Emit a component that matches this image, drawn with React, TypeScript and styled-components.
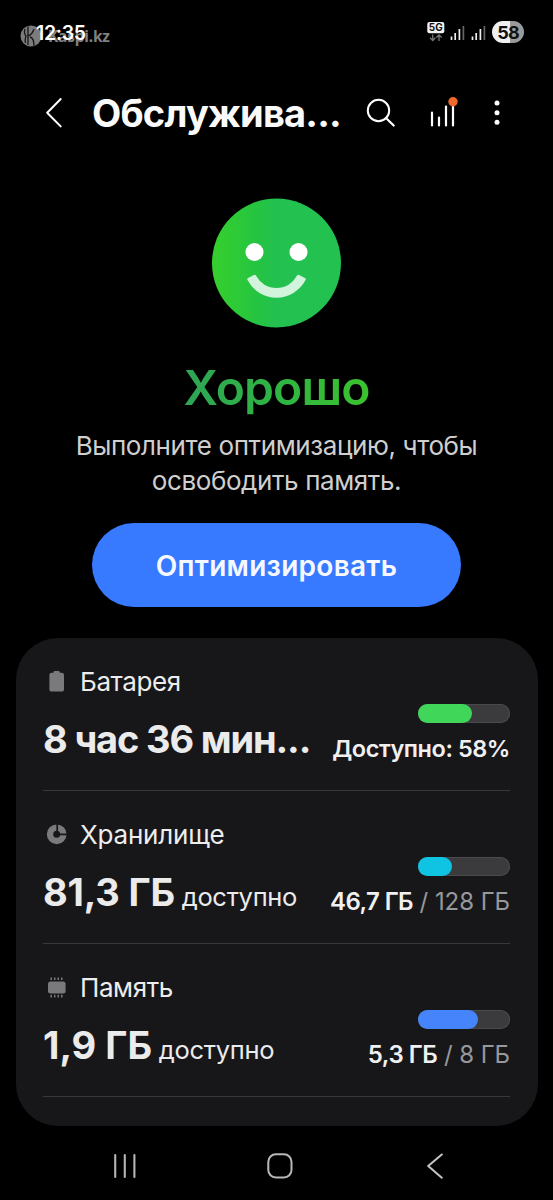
import React from "react";
import styled, { createGlobalStyle } from "styled-components";

const Global = createGlobalStyle`
  * { box-sizing: border-box; }
  body { margin: 0; background: #000; font-family: Inter, "Noto Sans", sans-serif; }
  svg { display: block; flex: none; }
`;

const Screen = styled.main`
  width: 553px;
  height: 1200px;
  display: flex;
  flex-direction: column;
  background: #000;
  color: #fff;
  overflow: hidden;
`;

const Txt = styled.span<{ $size: number; $weight?: number; $track?: number; $color?: string }>`
  font-size: ${(p) => p.$size}px;
  font-weight: ${(p) => p.$weight ?? 400};
  letter-spacing: ${(p) => p.$track ?? 0}px;
  color: ${(p) => p.$color ?? "inherit"};
  white-space: nowrap;
`;

const StatusBar = styled.div`
  height: 64px;
  display: flex;
  justify-content: space-between;
  padding: 0 29px 0 20px;
`;

const Clock = styled.div`
  position: relative;
  display: flex;
  width: 100px;
  padding: 22px 0 0 16px;
  line-height: 22px;
`;

const Watermark = styled.div`
  position: absolute;
  left: 0;
  top: 25px;
  display: flex;
  align-items: center;
  gap: 6px;
  color: #808080;
  font-family: "Noto Sans", sans-serif;
`;

const Time = styled(Txt)`
  position: relative;
`;

const StatusIcons = styled.div`
  display: flex;
  padding-top: 21px;
`;

const Battery = styled.div`
  width: 32px;
  height: 22px;
  margin-left: 6px;
  border-radius: 11px;
  background: linear-gradient(90deg, #f0f0f0 57%, #9a9a9a 57%);
  color: #111;
  display: flex;
  align-items: center;
  justify-content: center;
`;

const Header = styled.header`
  height: 98px;
  display: flex;
  align-items: center;
  padding: 0 48px 0 45px;
`;

const Title = styled.h1`
  margin: 0 0 0 29px;
  width: 274px;
  font-size: 38px;
  line-height: 48px;
  font-weight: 700;
  letter-spacing: -0.8px;
  color: #fafafa;
  white-space: nowrap;
`;

const Hero = styled.section`
  height: 475.5px;
  display: flex;
  flex-direction: column;
  align-items: center;
  padding-top: 36px;
`;

const Status = styled.h2`
  margin: 31px 0 0;
  height: 58px;
  line-height: 58px;
  font-size: 48px;
  font-weight: 600;
  letter-spacing: -0.9px;
  background: linear-gradient(90deg, #2fa456, #2fb443 50%, #3cc22e);
  background-clip: text;
  -webkit-background-clip: text;
  color: transparent;
`;

const Hint = styled.p`
  margin: 11px 0 0;
  text-align: center;
  font-size: 26px;
  line-height: 35px;
  letter-spacing: -0.4px;
  color: #cfcfcf;
`;

const Optimize = styled.button`
  margin-top: 25px;
  width: 369px;
  height: 84px;
  border: 0;
  border-radius: 42px;
  background: #387aff;
  color: #f5f9ff;
  font: 600 28px/84px Inter, sans-serif;
  letter-spacing: 0.28px;
  padding: 1px 0 0;
`;

const Card = styled.section`
  width: 522px;
  height: 488.5px;
  margin-left: 15.5px;
  padding: 0 27.5px;
  border-radius: 42px;
  background: #17171a;
`;

const Row = styled.div`
  height: 153px;
  display: flex;
  justify-content: space-between;
  border-bottom: 1.5px solid #38383a;
`;

const Info = styled.div`
  display: flex;
  flex-direction: column;
  padding-top: 29px;
`;

const Label = styled.div`
  height: 30px;
  display: flex;
  align-items: center;
  gap: 10px;
  padding-left: 3px;
  color: #ededed;
`;

const Value = styled.div`
  margin-top: 19px;
  line-height: 46px;
  color: #ebebec;
  white-space: nowrap;
`;

const Usage = styled.div`
  display: flex;
  flex-direction: column;
  align-items: flex-end;
  padding-top: 66px;
`;

const Track = styled.div`
  width: 92px;
  height: 19px;
  border-radius: 10px;
  background: #3b3b3d;
  box-shadow: inset 0 0 0 1px #4a4a4c;
`;

const Fill = styled.div<{ $w: number; $color: string }>`
  width: ${(p) => p.$w}px;
  height: 19px;
  border-radius: 10px;
  background: ${(p) => p.$color};
`;

const Amount = styled.div`
  margin-top: 11px;
  line-height: 30px;
  color: #f0f0f1;
  white-space: nowrap;
`;

const NavBar = styled.nav`
  height: 74px;
  display: flex;
  align-items: center;
  padding: 6px 0 0 112px;
  gap: 128.5px;
`;

const Signal = ({ gap }: { gap: number }) => (
  <svg width="15" height="22" viewBox="0 0 15 22" style={{ marginLeft: gap }}>
    <path d="M1.5 15.5V19M5.2 12V19M9.4 8V19" stroke="#eee" strokeWidth="1.7" fill="none" />
    <path d="M13.4 5V19" stroke="#666" strokeWidth="1.7" />
  </svg>
);

const BatteryIcon = () => (
  <svg width="24" height="24" viewBox="0 0 24 24">
    <path d="M7.5 2 Q7.5 1 8.5 1 H12.7 Q13.7 1 13.7 2 V2.7 H15.8 Q18 2.7 18 4.9 V19.4 Q18 21.6 15.8 21.6 H5.6 Q3.4 21.6 3.4 19.4 V4.9 Q3.4 2.7 5.6 2.7 H7.5Z" fill="#7a7a7c" />
  </svg>
);

const StorageIcon = () => (
  <svg width="24" height="24" viewBox="0 0 24 24">
    <circle cx="10.7" cy="11.3" r="6.7" fill="none" stroke="#7a7a7c" strokeWidth="6.4" />
    <path d="M11.2 0.3V11.3H22" fill="none" stroke="#17171a" strokeWidth="1.7" />
  </svg>
);

const MemoryIcon = () => (
  <svg width="24" height="24" viewBox="0 0 24 24">
    <rect x="2" y="5.4" width="17.6" height="12.2" rx="2.5" fill="#7a7a7c" />
    <path d="M5.2 1.4V4M8.7 1.4V4M12.3 1.4V4M15.8 1.4V4M5.2 18.8V21.4M8.7 18.8V21.4M12.3 18.8V21.4M15.8 18.8V21.4" stroke="#7a7a7c" strokeWidth="1.5" />
  </svg>
);

export default function App() {
  return (
    <Screen>
      <Global />
      <StatusBar>
        <Clock>
          <Watermark>
            <svg width="22" height="22" viewBox="0 0 22 22">
              <circle cx="11" cy="11" r="10.5" fill="#7c7c7c" />
              <path d="M8 1.5V20M8 11Q12 10 14 4M10 12Q14 13 14 21M5 4Q3.5 8 6 11Q4.5 15 5.5 18" stroke="#151515" strokeWidth="1.3" fill="none" />
            </svg>
            <Txt $size={15.5} $weight={700} $track={-0.2}>Kaspi.kz</Txt>
          </Watermark>
          <Time $size={19.5} $weight={600} $track={-0.3}>12:35</Time>
        </Clock>
        <StatusIcons>
          <svg width="18" height="22" viewBox="0 0 18 22">
            <rect x="0.3" y="1" width="17" height="11.3" rx="2" fill="#f2f2f2" />
            <text x="8.8" y="10.3" textAnchor="middle" fontFamily="Inter" fontWeight="700" fontSize="10" fill="#111">5G</text>
            <path d="M5.7 13.5V19.3M3 16.8L5.7 19.5L8.4 16.8M12 20V14M9.3 16.5L12 13.8L14.7 16.5" fill="none" stroke="#777" strokeWidth="1.3" />
          </svg>
          <Signal gap={5} />
          <Signal gap={6} />
          <Battery><Txt $size={18} $weight={700} $track={-0.8}>58</Txt></Battery>
        </StatusIcons>
      </StatusBar>

      <Header>
        <svg width="18" height="32" viewBox="0 0 18 32">
          <path d="M15.7 2L2.2 15.7L15.7 29.4" fill="none" stroke="#fff" strokeWidth="2" strokeLinecap="round" strokeLinejoin="round" />
        </svg>
        <Title>Обслужива...</Title>
        <svg width="30" height="30" viewBox="0 0 30 30">
          <circle cx="12.5" cy="12.5" r="10.7" fill="none" stroke="#fff" strokeWidth="2" />
          <path d="M20 20L27.7 27.5" stroke="#fff" strokeWidth="2.2" strokeLinecap="round" />
        </svg>
        <svg width="32" height="32" viewBox="0 0 32 32" style={{ marginLeft: 33 }}>
          <path d="M3 15.5V28.5M10 20.5V28.5M17 9.5V28.5M24 6V28.5" stroke="#fff" strokeWidth="2.2" strokeLinecap="round" />
          <circle cx="24" cy="4.7" r="4.7" fill="#ef6a2c" />
        </svg>
        <svg width="6" height="26" viewBox="0 0 6 26" style={{ marginLeft: 33 }}>
          <circle cx="3" cy="3" r="2.5" fill="#fff" />
          <circle cx="3" cy="12.7" r="2.5" fill="#fff" />
          <circle cx="3" cy="22.3" r="2.5" fill="#fff" />
        </svg>
      </Header>

      <Hero>
        <svg width="129" height="130" viewBox="0 0 129 130">
          <defs>
            <linearGradient id="face" x1="0" x2="1" y1="0" y2="0">
              <stop offset="0" stopColor="#36d02c" />
              <stop offset="0.35" stopColor="#25c441" />
              <stop offset="0.5" stopColor="#22c150" />
              <stop offset="1" stopColor="#22c150" />
            </linearGradient>
          </defs>
          <circle cx="64.5" cy="65" r="64.5" fill="url(#face)" />
          <circle cx="42.5" cy="54" r="9" fill="#fff" />
          <circle cx="86.5" cy="54" r="9" fill="#fff" />
          <path d="M36.8 81.4L42.6 78.3A24.8 24.8 0 0 0 86.4 78.3L92.2 81.4A31.3 31.3 0 0 1 36.8 81.4Z" fill="#d3f4dc" stroke="#d3f4dc" strokeWidth="3" strokeLinejoin="round" />
        </svg>
        <Status>Хорошо</Status>
        <Hint>
          Выполните оптимизацию, чтобы
          <br />
          освободить память.
        </Hint>
        <Optimize>Оптимизировать</Optimize>
      </Hero>

      <Card>
        <Row>
          <Info>
            <Label><BatteryIcon /><Txt $size={26} $track={-0.4}>Батарея</Txt></Label>
            <Value><Txt $size={38} $weight={700} $track={-1.15}>8 час 36 мин...</Txt></Value>
          </Info>
          <Usage>
            <Track><Fill $w={53.5} $color="#3fd65a" /></Track>
            <Amount><Txt $size={23.5} $weight={600} $track={-0.45}>Доступно: 58%</Txt></Amount>
          </Usage>
        </Row>
        <Row>
          <Info>
            <Label><StorageIcon /><Txt $size={26} $track={-0.2}>Хранилище</Txt></Label>
            <Value>
              <Txt $size={38} $weight={700} $track={-0.2}>81,3 ГБ</Txt>
              <Txt $size={25.5} $track={-0.3}> доступно</Txt>
            </Value>
          </Info>
          <Usage>
            <Track><Fill $w={34} $color="#0fc3e3" /></Track>
            <Amount>
              <Txt $size={24} $weight={600} $track={-0.6}>46,7 ГБ</Txt>
              <Txt $size={24} $track={-0.05} $color="#98989a"> / 128 ГБ</Txt>
            </Amount>
          </Usage>
        </Row>
        <Row>
          <Info>
            <Label><MemoryIcon /><Txt $size={26} $track={-0.4}>Память</Txt></Label>
            <Value>
              <Txt $size={38} $weight={700} $track={0}>1,9 ГБ</Txt>
              <Txt $size={25.5} $track={-0.3}> доступно</Txt>
            </Value>
          </Info>
          <Usage>
            <Track><Fill $w={60} $color="#4584fb" /></Track>
            <Amount>
              <Txt $size={24} $weight={600} $track={-0.5}>5,3 ГБ</Txt>
              <Txt $size={24} $track={-0.05} $color="#98989a"> / 8 ГБ</Txt>
            </Amount>
          </Usage>
        </Row>
      </Card>

      <NavBar>
        <svg width="26" height="26" viewBox="0 0 26 26">
          <path d="M3.2 2V24M12.8 2V24M22.4 2V24" stroke="#b4b4b4" strokeWidth="2.1" strokeLinecap="round" />
        </svg>
        <svg width="26" height="26" viewBox="0 0 26 26">
          <rect x="1.3" y="1.3" width="23.2" height="23.2" rx="7.5" fill="none" stroke="#b8b8b8" strokeWidth="2" />
        </svg>
        <svg width="18" height="26" viewBox="0 0 18 26" style={{ marginLeft: 5 }}>
          <path d="M15.8 1.5L2.2 13L15.8 24.7" fill="none" stroke="#c4c4c4" strokeWidth="2" strokeLinecap="round" strokeLinejoin="round" />
        </svg>
      </NavBar>
    </Screen>
  );
}
